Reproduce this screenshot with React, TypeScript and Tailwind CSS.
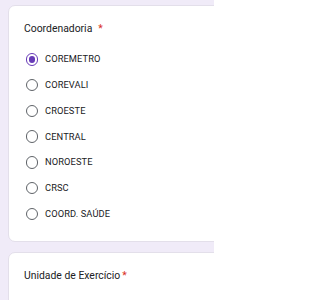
const OPTIONS = ["COREMETRO", "COREVALI", "CROESTE", "CENTRAL", "NOROESTE", "CRSC", "COORD. SAÚDE"];

function Radio({ checked }: { checked: boolean }) {
  return (
    <span
      className={`flex h-[12.5px] w-[12.5px] shrink-0 items-center justify-center rounded-full border-[1.4px] ${
        checked ? "border-[#673ab7]" : "border-[#5f6368]"
      }`}
    >
      {checked && <span className="h-[6.5px] w-[6.5px] rounded-full bg-[#673ab7]" />}
    </span>
  );
}

export default function App() {
  return (
    <div
      className="h-[300px] w-[214px] overflow-hidden bg-[#f0ebf8] pl-[8px] pt-[5px]"
      style={{ fontFamily: "Roboto, 'Liberation Sans', sans-serif" }}
    >
      <div className="w-[220px] rounded-[7px] border border-[#e3dfea] bg-white pb-[14px] pl-[15px] pt-[16px]">
        <div className="flex h-[14px] items-center text-[10.4px] text-[#202124]">
          <span>Coordenadoria</span>
          <span className="ml-[6px] text-[#d93025]">*</span>
        </div>
        <div className="mt-[10.5px] flex flex-col">
          {OPTIONS.map((o, i) => (
            <label key={o} className="flex h-[25.75px] items-center gap-[7px] pl-[1.5px]">
              <Radio checked={i === 0} />
              <span className="text-[9.3px] tracking-[0.1px] text-[#202124]">{o}</span>
            </label>
          ))}
        </div>
      </div>

      <div className="mt-[10px] h-[80px] w-[220px] rounded-[7px] border border-[#e3dfea] bg-white pl-[15px] pt-[16px]">
        <div className="flex h-[14px] items-center text-[10.4px] text-[#202124]">
          <span>Unidade de Exercício</span>
          <span className="ml-[2px] text-[#d93025]">*</span>
        </div>
      </div>
    </div>
  );
}
